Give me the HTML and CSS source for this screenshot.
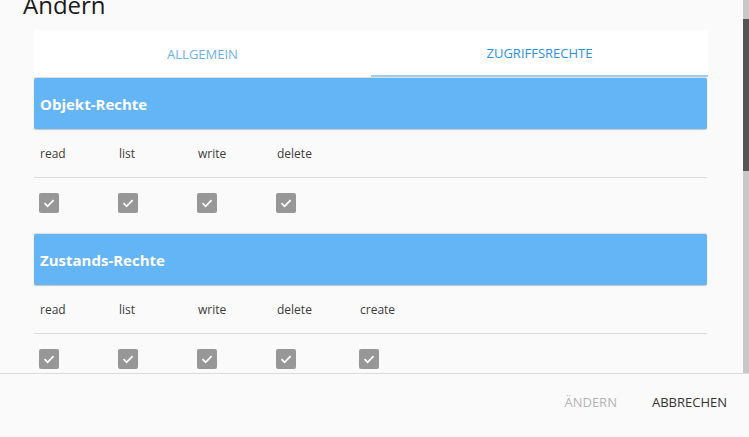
FILE: index.html
```html
<!DOCTYPE html>
<html lang="de">
<head>
<meta charset="utf-8">
<title>Ändern</title>
<link rel="stylesheet" href="styles.css">
</head>
<body>
<div class="dialog">
  <div class="viewport">
    <div class="content" id="content">
      <div class="inner">
        <h1 class="title">Ändern</h1>
        <div class="tabs">
          <div class="tab">ALLGEMEIN</div>
          <div class="tab active">ZUGRIFFSRECHTE</div>
        </div>
        <section class="group">
          <div class="group-head">Objekt-Rechte</div>
          <div class="row labels">
            <span>read</span><span>list</span><span>write</span><span>delete</span>
          </div>
          <div class="row boxes">
            <span class="cb"><svg viewBox="0 0 20 20"><path d="M5.5 10.2 L8.6 13.3 L14.6 7.2"/></svg></span>
            <span class="cb"><svg viewBox="0 0 20 20"><path d="M5.5 10.2 L8.6 13.3 L14.6 7.2"/></svg></span>
            <span class="cb"><svg viewBox="0 0 20 20"><path d="M5.5 10.2 L8.6 13.3 L14.6 7.2"/></svg></span>
            <span class="cb"><svg viewBox="0 0 20 20"><path d="M5.5 10.2 L8.6 13.3 L14.6 7.2"/></svg></span>
          </div>
        </section>
        <section class="group">
          <div class="group-head">Zustands-Rechte</div>
          <div class="row labels">
            <span>read</span><span>list</span><span>write</span><span>delete</span><span>create</span>
          </div>
          <div class="row boxes">
            <span class="cb"><svg viewBox="0 0 20 20"><path d="M5.5 10.2 L8.6 13.3 L14.6 7.2"/></svg></span>
            <span class="cb"><svg viewBox="0 0 20 20"><path d="M5.5 10.2 L8.6 13.3 L14.6 7.2"/></svg></span>
            <span class="cb"><svg viewBox="0 0 20 20"><path d="M5.5 10.2 L8.6 13.3 L14.6 7.2"/></svg></span>
            <span class="cb"><svg viewBox="0 0 20 20"><path d="M5.5 10.2 L8.6 13.3 L14.6 7.2"/></svg></span>
            <span class="cb"><svg viewBox="0 0 20 20"><path d="M5.5 10.2 L8.6 13.3 L14.6 7.2"/></svg></span>
          </div>
        </section>
      </div>
    </div>
    <div class="scrollbar"><div class="thumb"></div></div>
  </div>
  <div class="footer">
    <button class="btn disabled" disabled>ÄNDERN</button>
    <button class="btn">ABBRECHEN</button>
  </div>
</div>
<script src="app.js"></script>
</body>
</html>
```
FILE: styles.css
```css
html, body {
  margin: 0;
  padding: 0;
  background: #fafafa;
  font-family: "Open Sans", "Noto Sans", sans-serif;
  color: #333;
  overflow: hidden;
}
.dialog {
  display: flex;
  flex-direction: column;
  height: 437px;
}
.viewport {
  display: flex;
  height: 373px;
  flex: none;
}
.content {
  flex: 1;
  min-width: 0;
  overflow: hidden;
}
.inner {
  padding-bottom: 480px;
}
.scrollbar {
  width: 6px;
  flex: none;
  background: #c8c8c8;
}
.thumb {
  margin-top: 19px;
  height: 152px;
  background: #555;
}
.title {
  margin: 0;
  padding: 35px 0 9px 23px;
  font-size: 24px;
  line-height: 32px;
  font-weight: 400;
  color: #1a1a1a;
}
.tabs {
  display: flex;
  margin: 0 35px 0 34px;
  background: #fff;
  height: 47px;
}
.tab {
  flex: 1;
  display: flex;
  align-items: center;
  justify-content: center;
  font-size: 13px;
  color: #6ab2ef;
  box-sizing: border-box;
  padding-top: 1px;
}
.tab.active {
  color: #2a8fe6;
  border-bottom: 2px solid #9ccff8;
}
.group {
  margin: 1px 36px 0 34px;
}
.group-head {
  height: 51px;
  display: flex;
  align-items: center;
  padding-left: 6px;
  background: #64b5f6;
  color: #fff;
  font-weight: 700;
  font-size: 15px;
  border-radius: 2px;
  box-shadow: 0 1px 1px rgba(0,0,0,0.22), 0 -1px 1px rgba(0,0,0,0.12);
}
.row {
  display: grid;
  grid-template-columns: 79px 79px 79px 83px auto;
  padding-left: 5px;
}
.labels {
  height: 47px;
  align-items: center;
  font-size: 12px;
  color: #3a3a3a;
  border-bottom: 1px solid #dcdcdc;
  padding-top: 1px;
  box-sizing: content-box;
}
.labels span {
  padding-left: 1px;
}
.boxes {
  height: 55px;
  padding-top: 15px;
  box-sizing: border-box;
  align-items: start;
}
.cb {
  width: 20px;
  height: 20px;
  background: #979797;
  border-radius: 2px;
  display: block;
}
.cb svg {
  width: 20px;
  height: 20px;
  display: block;
}
.cb path {
  fill: none;
  stroke: #fff;
  stroke-width: 1.8;
}
.footer {
  flex: 1;
  border-top: 1px solid #dcdcdc;
  display: flex;
  justify-content: flex-end;
  align-items: flex-start;
  gap: 35px;
  padding: 19px 22px 0 0;
}
.btn {
  background: none;
  border: none;
  padding: 0;
  font-family: inherit;
  font-size: 13px;
  line-height: 18px;
  color: #333;
}
.btn.disabled {
  color: #b3b3b3;
}
```
FILE: app.js
```js
document.getElementById('content').scrollTop = 46;
```
